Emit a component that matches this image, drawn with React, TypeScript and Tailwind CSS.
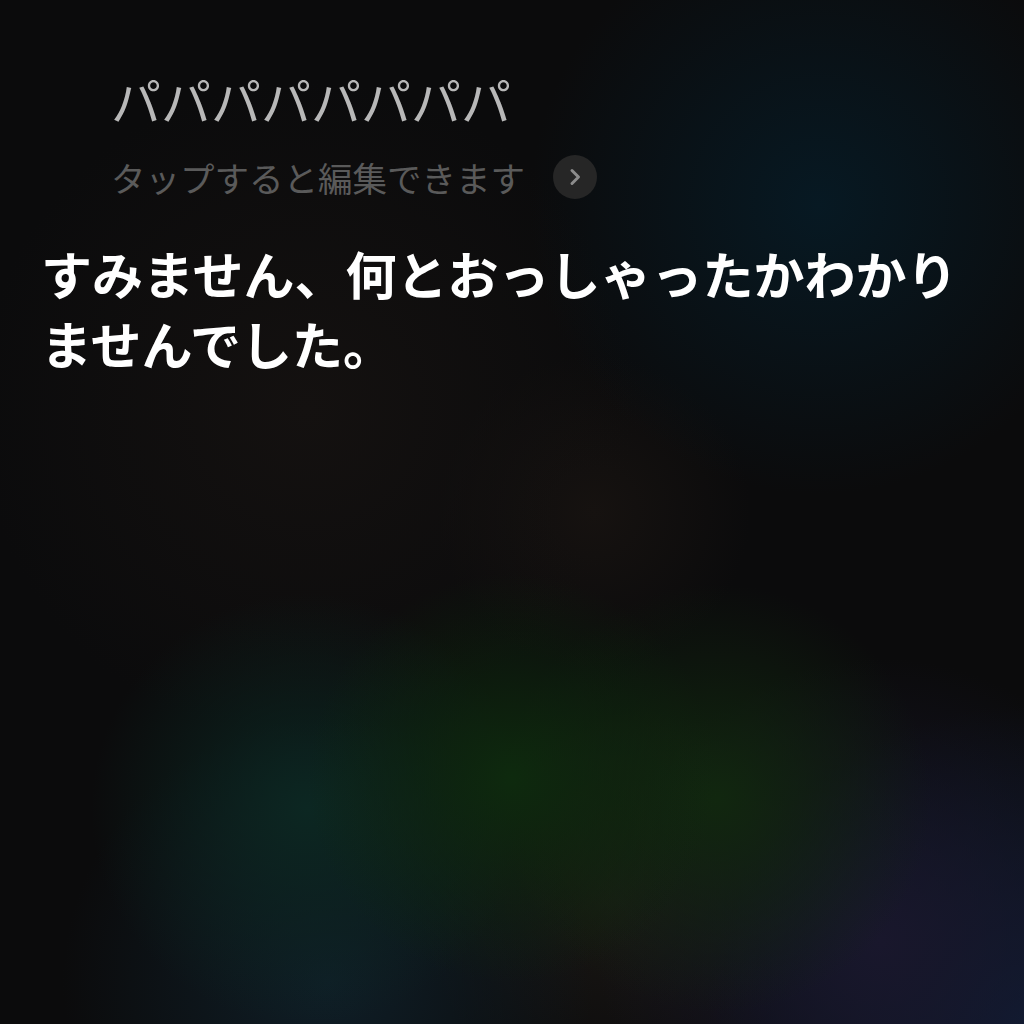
import React from 'react';

const jp = "font-['Noto_Sans_CJK_JP','Noto_Sans',sans-serif]";

export default function App() {
  return (
    <div
      className={`relative w-[1024px] h-[1024px] overflow-hidden bg-[#0b0b0c] ${jp} bg-[radial-gradient(circle_at_50%_76%,#0e2a0e_0%,transparent_22%),radial-gradient(circle_at_30%_79%,#0c2722_0%,transparent_20%),radial-gradient(circle_at_70%_78%,#11270f_0%,transparent_20%),radial-gradient(circle_at_80%_20%,#071923_0%,transparent_25%),radial-gradient(circle_at_86%_92%,#19172c_0%,transparent_22%),radial-gradient(circle_at_100%_100%,#0c1c33_0%,transparent_22%),radial-gradient(circle_at_32%_96%,#0f1e27_0%,transparent_22%),radial-gradient(circle_at_60%_88%,#1a1714_0%,transparent_18%),radial-gradient(circle_at_30%_40%,#141110_0%,transparent_35%),radial-gradient(circle_at_58%_50%,#161210_0%,transparent_20%)]`}
    >
      <div className="flex flex-col pt-[73px]">
        {/* 認識したテキスト */}
        <div className="pl-[111px] text-[50px] leading-[52px] font-normal text-[#b8b8b8]">
          パパパパパパパパ
        </div>
        <div className="flex items-center pl-[111px] mt-[30px] gap-[28px]">
          <span className="text-[34.5px] leading-[44px] text-[#5a5a5a]">タップすると編集できます</span>
          <span className="flex w-[44px] h-[44px] rounded-full bg-[#262626] items-center justify-center">
            <svg width="20" height="20" viewBox="0 0 20 20" fill="none">
              <path d="M7 3.5 L13.5 10 L7 16.5" stroke="#8c8c8c" strokeWidth="3" strokeLinecap="round" strokeLinejoin="round" />
            </svg>
          </span>
        </div>
        {/* Siriの返答 */}
        <p className="pl-[41px] mt-[39px] w-[980px] text-[51px] leading-[70px] font-bold text-white">
          すみません、何とおっしゃったかわかりませんでした。
        </p>
      </div>
    </div>
  );
}
